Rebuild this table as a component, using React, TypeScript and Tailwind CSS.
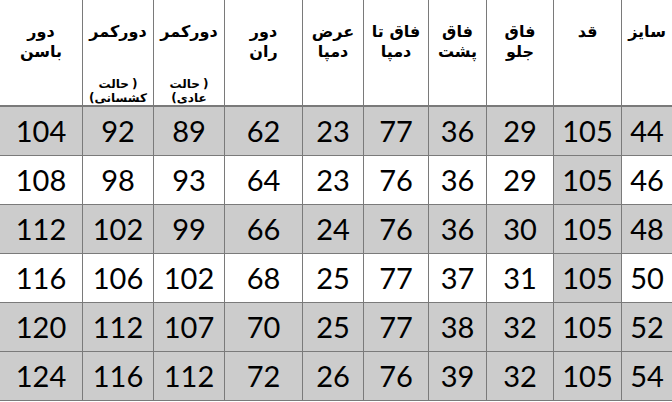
const cols = [
  { w: 'w-[51px]', title: ['سایز'] },
  { w: 'w-[68px]', title: ['قد'] },
  { w: 'w-[67px]', title: ['فاق', 'جلو'] },
  { w: 'w-[58px]', title: ['فاق', 'پشت'] },
  { w: 'w-[65px]', title: ['فاق تا', 'دمپا'] },
  { w: 'w-[61px]', title: ['عرض', 'دمپا'] },
  { w: 'w-[78px]', title: ['دور', 'ران'] },
  { w: 'w-[71px]', title: ['دورکمر'], note: 'عادی' },
  { w: 'w-[71px]', title: ['دورکمر'], note: 'کشسانی' },
  { w: 'w-[82px]', title: ['دور', 'باسن'] },
];

const rows = [
  [44, 105, 29, 36, 77, 23, 62, 89, 92, 104],
  [46, 105, 29, 36, 76, 23, 64, 93, 98, 108],
  [48, 105, 30, 36, 76, 24, 66, 99, 102, 112],
  [50, 105, 31, 37, 77, 25, 68, 102, 106, 116],
  [52, 105, 32, 38, 77, 25, 70, 107, 112, 120],
  [54, 105, 32, 39, 76, 26, 72, 112, 116, 124],
];

// rows shaded fully; the others only keep the قد column grey
const shaded = [true, false, true, false, true, true];

export default function App() {
  return (
    <div className="w-[672px] h-[402px] bg-white overflow-hidden" dir="rtl">
      {/* Header */}
      <div className="flex h-[107px] border-b-2 border-[#7a7a7a]">
        {cols.map((c, i) => (
          <div
            key={i}
            className={`${c.w} shrink-0 flex flex-col items-center pt-[22px] text-black ${
              i < cols.length - 1 ? 'border-e border-[#7a7a7a]' : ''
            }`}
            style={{ fontFamily: '"DejaVu Sans", sans-serif' }}
          >
            {c.title.map((t, j) => (
              <div key={j} className="text-[16px] leading-[20px] font-bold whitespace-nowrap">
                {t}
              </div>
            ))}
            {c.note && (
              <div className="mt-auto flex flex-col items-center text-[12px] leading-[14px] font-bold">
                {/* wrapped "(حالت ...)" as it shows in the sheet */}
                <div dir="ltr" className="flex gap-[3px]">
                  <span>حالت</span>
                  <span>)</span>
                </div>
                <div dir="ltr" className="flex">
                  <span>(</span>
                  <span>{c.note}</span>
                </div>
              </div>
            )}
          </div>
        ))}
      </div>

      {/* Body */}
      {rows.map((r, ri) => (
        <div key={ri} className="flex h-[49px]">
          {r.map((v, ci) => {
            const grey = shaded[ri] || ci === 1;
            return (
              <div
                key={ci}
                className={`${cols[ci].w} shrink-0 flex items-center justify-center border-b border-[#7a7a7a] ${
                  ci < r.length - 1 ? 'border-e' : ''
                } ${grey ? 'bg-[#cccccc]' : 'bg-white'}`}
              >
                <span
                  className="text-[29px] leading-none text-black pb-[2px]"
                  style={{ fontFamily: 'Lato, sans-serif' }}
                >
                  {v}
                </span>
              </div>
            );
          })}
        </div>
      ))}
    </div>
  );
}
